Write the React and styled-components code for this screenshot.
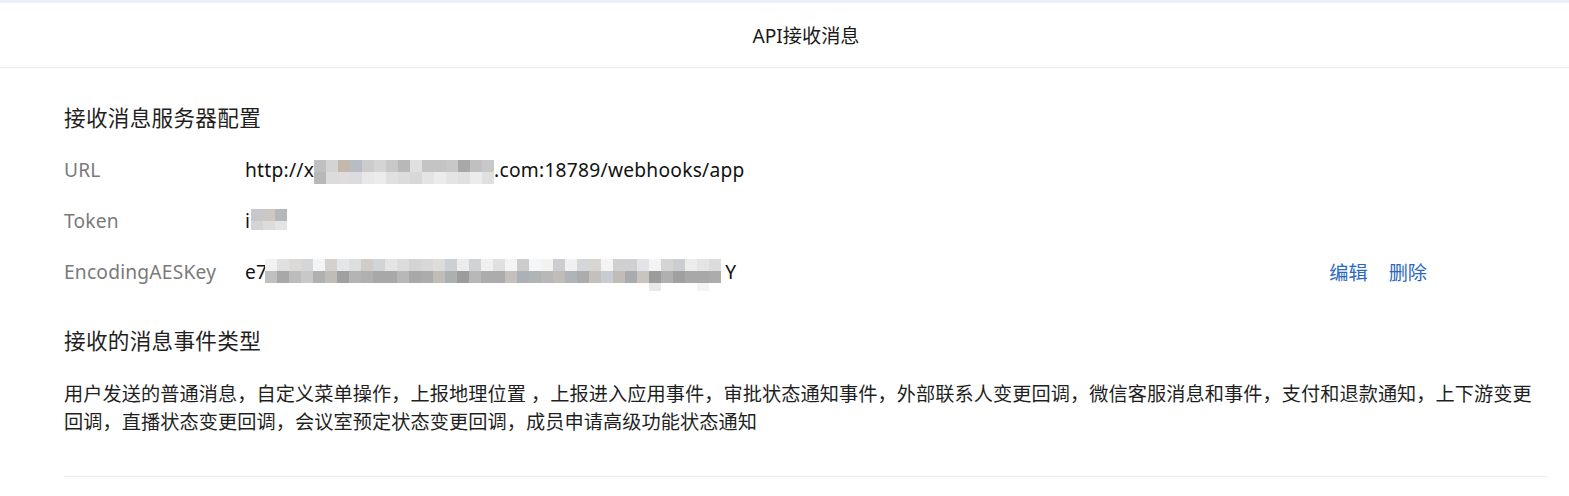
import React from "react";
import styled, { createGlobalStyle } from "styled-components";

const GlobalStyle = createGlobalStyle`
  html, body { margin: 0; padding: 0; background: #ffffff; }
  body {
    font-family: "Noto Sans", "Noto Sans CJK SC", sans-serif;
    color: #1f1f1f;
    -webkit-font-smoothing: antialiased;
  }
`;

const Page = styled.div`
  width: 1569px;
  min-height: 496px;
  border-top: 3px solid #e8eefa;
  box-sizing: border-box;
  background: #fff;
`;

const Header = styled.header`
  height: 64px;
  display: flex;
  align-items: center;
  justify-content: center;
  padding-left: 43px;
  border-bottom: 1px solid #ececec;
  font-size: 19.2px;
  color: #1a1a1a;
`;

const Content = styled.main`
  padding: 35px 21px 0 64px;
`;

const SectionTitle = styled.h2`
  margin: ${(p) => p.$mt || 0}px 0 0;
  font-size: 21.6px;
  font-weight: 400;
  letter-spacing: 0.3px;
  line-height: 30px;
  color: #1f1f1f;
`;

const FieldList = styled.div`
  margin-top: 11px;
  display: flex;
  flex-direction: column;
`;

const Row = styled.div`
  height: 51px;
  display: grid;
  grid-template-columns: 181px 1fr auto;
  align-items: center;
  font-size: 19.2px;
`;

const Label = styled.div`
  color: #7a7a7a;
  letter-spacing: 0.2px;
`;

const Value = styled.div`
  display: flex;
  align-items: center;
  color: #111;
  white-space: nowrap;
  letter-spacing: 0.25px;
`;

const Actions = styled.div`
  display: flex;
  gap: 21px;
  margin-right: 121px;
`;

const LinkButton = styled.a`
  color: #2a68bf;
  cursor: pointer;
  text-decoration: none;
`;

const MosaicWrap = styled.div`
  display: flex;
  flex-direction: column;
  height: ${(p) => p.$h}px;
  margin: 0 ${(p) => p.$mr || 0}px 0 ${(p) => p.$ml || 0}px;
`;

const MosaicRow = styled.div`
  display: flex;
  height: ${(p) => p.$h}px;
`;

const Cell = styled.span`
  width: ${(p) => p.$w}px;
  height: 100%;
  background: ${(p) => p.$c};
`;

const Paragraph = styled.p`
  margin: 24px 0 0;
  font-size: 19.2px;
  line-height: 28px;
  letter-spacing: 0.06px;
  color: #1f1f1f;
  padding-right: 10px;
`;

const Divider = styled.hr`
  margin: 40px 0 0;
  border: 0;
  border-top: 1px solid #ececec;
`;

function Mosaic({ rows, cell = 12, rowHeights, shift = 0, ml, mr }) {
  const hs = rowHeights || rows.map(() => cell);
  const total = hs.reduce((a, b) => a + b, 0);
  return (
    <MosaicWrap $h={total} $ml={ml} $mr={mr} style={{ transform: `translateY(${shift}px)` }}>
      {rows.map((r, i) => (
        <MosaicRow key={i} $h={hs[i]}>
          {r.map((c, j) => (
            <Cell key={j} $w={cell} $c={c} />
          ))}
        </MosaicRow>
      ))}
    </MosaicWrap>
  );
}

const urlRows = [
  ["#c0c0c0", "#d4d4d4", "#c4b8ac", "#b8bcc4", "#cccccc", "#d4d4d4", "#c8c8c8", "#b8b8b8", "#e0e0e0", "#c4c4c4", "#c4c4c4", "#c8c8c8", "#a8a8a8", "#c0c0c0", "#c8c8c8"],
  ["#b8b8b8", "#dcdcdc", "#e0dcdc", "#dcdce0", "#e8e8e8", "#ececec", "#e0e0e0", "#dcdcdc", "#d8d8d8", "#e4e4e4", "#ececec", "#e4e4e4", "#e0e0e0", "#ececec", "#e0e0e0"],
];

const tokenRows = [
  ["#c8c8cc", "#ccc8c4", "#b4b8b8"],
  ["#d4d4d8", "#dcdcdc", "#e4e4e4"],
];

const T = "transparent";
const aesRows = [
  ["#f0f2f4", "#e0e0e0", "#dcdad8", "#d4d6d8", "#f4f4f4", "#d4d0ce", "#e4e6e8", "#dcdee0", "#d0ccc8", "#d0d4d4", "#e4e4e4", "#dcdcdc", "#d4d4d4", "#d8d8d8", "#dcdcda", "#ccd0d4", "#ececec", "#d0d2d4", "#f0f0f0",
   "#e0e0e0", "#f4f4f4", "#cccccc", "#f4f6f8", "#f2f2f0", "#cccdd0", "#f0f0f0", "#d4d6da", "#d8d6d4", "#f4f4f4", "#d0d0d0", "#d0d0d0", "#e4e4e8", "#f4f4f4", "#d4d4d4", "#cccdd2", "#ececec", "#e4e4e4", "#dcdcdc"],
  ["#c0c0c0", "#a8a8a8", "#bcbcbc", "#c8c8c8", "#b0b0b0", "#c0bcb8", "#a0a0a0", "#b4b4b4", "#b0b0b0", "#a8a8a8", "#a8a8a8", "#b8b8b8", "#a8a8a8", "#acacac", "#c0bcb8", "#acb0b0", "#9c9c9c", "#b8b8b8", "#acacac",
   "#acacac", "#c4c0bc", "#acb0b8", "#b0b4b4", "#b8b8b8", "#c0bcb8", "#b0b4b8", "#acacac", "#c4c0bc", "#c8ccd0", "#c0bcb8", "#a8acb0", "#c8c4c0", "#9c9c9c", "#b0b0b0", "#a0a0a0", "#a8a8a8", "#a8a8a8", "#acacac"],
  [T, T, T, T, T, T, T, T, T, T, T, T, T, T, T, T, T, T, T, T, T, T, T, T, T, T, T, T, T, T, T, T, "#e8e8e8", T, T, T, "#f4f4f4", T],
];

export default function App() {
  return (
    <>
      <GlobalStyle />
      <Page>
        <Header>API接收消息</Header>
        <Content>
          <SectionTitle>接收消息服务器配置</SectionTitle>
          <FieldList>
            <Row>
              <Label>URL</Label>
              <Value>
                http://x
                <Mosaic rows={urlRows} shift={2} />
                .com:18789/webhooks/app
              </Value>
              <span />
            </Row>
            <Row>
              <Label>Token</Label>
              <Value>
                i
                <Mosaic rows={tokenRows} rowHeights={[12, 9]} shift={-1} ml={1} />
              </Value>
              <span />
            </Row>
            <Row>
              <Label>EncodingAESKey</Label>
              <Value>
                e7
                <Mosaic rows={aesRows} rowHeights={[12, 12, 8]} shift={3} ml={-2} mr={4} />
                Y
              </Value>
              <Actions>
                <LinkButton>编辑</LinkButton>
                <LinkButton>删除</LinkButton>
              </Actions>
            </Row>
          </FieldList>
          <SectionTitle $mt={29}>接收的消息事件类型</SectionTitle>
          <Paragraph>
            用户发送的普通消息，自定义菜单操作，上报地理位置 ，上报进入应用事件，审批状态通知事件，外部联系人变更回调，微信客服消息和事件，支付和退款通知，上下游变更回调，直播状态变更回调，会议室预定状态变更回调，成员申请高级功能状态通知
          </Paragraph>
          <Divider />
        </Content>
      </Page>
    </>
  );
}
